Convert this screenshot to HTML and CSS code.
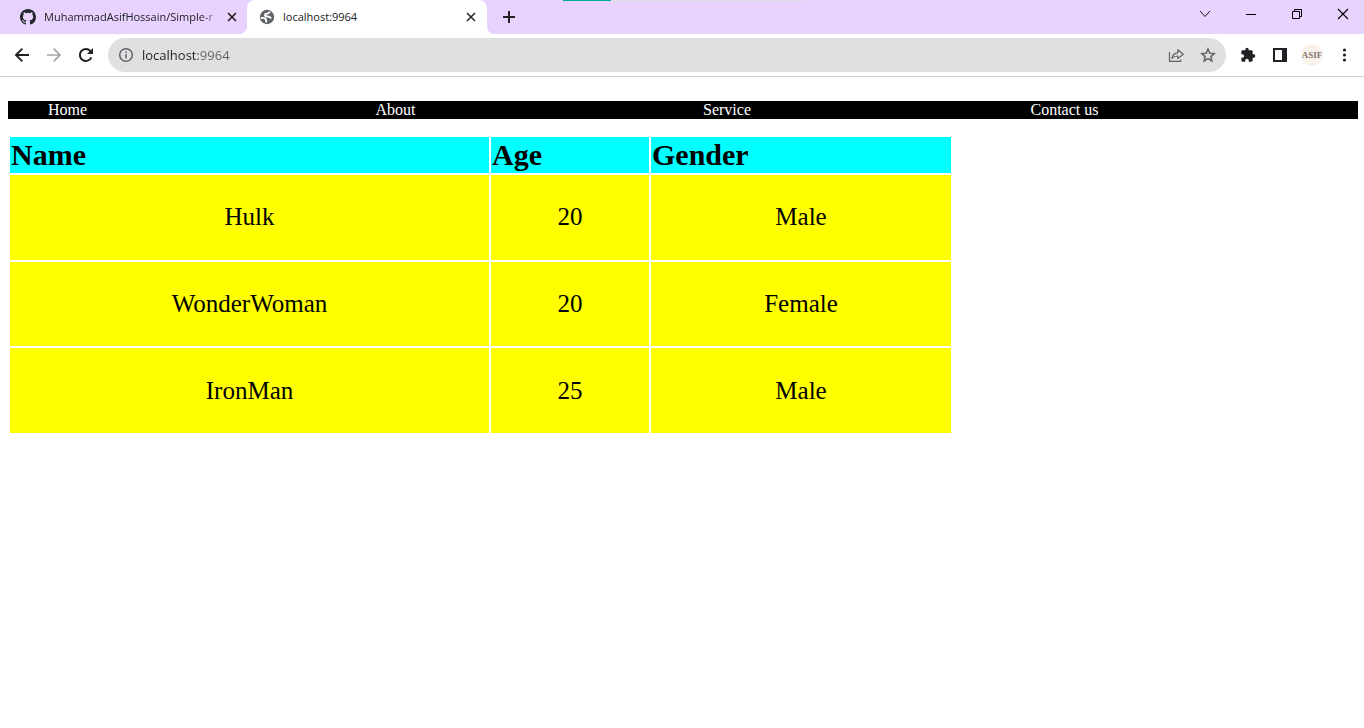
FILE: index.html
```html
<!DOCTYPE html>
<html lang="en">
<head>
<meta charset="utf-8">
<title>localhost:9964</title>
<link rel="stylesheet" href="styles.css">
</head>
<body>
<header class="browser">
  <div class="tab-strip">
    <div class="tab">
      <svg class="favicon" width="16" height="16" viewBox="0 0 16 16" fill="#24292f"><path d="M8 0C3.58 0 0 3.58 0 8c0 3.54 2.29 6.53 5.47 7.59.4.07.55-.17.55-.38 0-.19-.01-.82-.01-1.49-2.01.37-2.53-.49-2.69-.94-.09-.23-.48-.94-.82-1.13-.28-.15-.68-.52-.01-.53.63-.01 1.08.58 1.23.82.72 1.21 1.87.87 2.33.66.07-.52.28-.87.51-1.07-1.78-.2-3.64-.89-3.64-3.95 0-.87.31-1.59.82-2.15-.08-.2-.36-1.02.08-2.12 0 0 .67-.21 2.2.82a7.6 7.6 0 0 1 4 0c1.53-1.04 2.2-.82 2.2-.82.44 1.1.16 1.92.08 2.12.51.56.82 1.27.82 2.15 0 3.07-1.87 3.75-3.65 3.95.29.25.54.73.54 1.48 0 1.07-.01 1.93-.01 2.2 0 .21.15.46.55.38A8.01 8.01 0 0 0 16 8c0-4.42-3.58-8-8-8z"/></svg>
      <span class="tab-title tab-title-fade">MuhammadAsifHossain/Simple-r</span>
      <button class="tab-close" aria-label="Close tab"><svg width="16" height="16" viewBox="0 0 16 16" stroke="#202124" stroke-width="1.7"><path d="M4 4l8 8M12 4l-8 8"/></svg></button>
    </div>
    <div class="tab tab-active">
      <svg class="favicon" width="16" height="16" viewBox="0 0 16 16"><circle cx="8" cy="8" r="7.2" fill="#5f6368"/><path d="M10.500 3.200C9.700 4.300 8.900 4.600 7.600 4.700 6.400 4.800 5.900 5.300 6 6.200c.1 1 1 1.300 2.400 1.300 1.500 0 2.500.4 3.300 1.300M2.600 9c1.700-.2 3.300 0 4 .9.700 1 .2 1.700.7 2.800" fill="none" stroke="#fff" stroke-width="1.900" stroke-linecap="round"/></svg>
      <span class="tab-title">localhost:9964</span>
      <button class="tab-close" aria-label="Close tab"><svg width="16" height="16" viewBox="0 0 16 16" stroke="#202124" stroke-width="1.5"><path d="M4 4l8 8M12 4l-8 8"/></svg></button>
    </div>
    <button class="new-tab" aria-label="New tab"><svg width="16" height="16" viewBox="0 0 16 16" stroke="#202124" stroke-width="2"><path d="M2 8h12M8 2v12"/></svg></button>
    <div class="window-controls">
      <button class="window-button" aria-label="Search tabs"><svg width="12" height="12" viewBox="0 0 12 12" fill="none" stroke="#111"><path d="M1 3l5 5.500 5-5.500"/></svg></button>
      <button class="window-button" aria-label="Minimize"><svg width="12" height="12" viewBox="0 0 12 12" fill="none" stroke="#000"><path d="M1 6.500h10"/></svg></button>
      <button class="window-button" aria-label="Restore"><svg width="12" height="12" viewBox="0 0 12 12" fill="none" stroke="#000"><path d="M1.500 3.500h7v7h-7zM3.500 3.500v-2h7v7h-2"/></svg></button>
      <button class="window-button" aria-label="Close"><svg width="12" height="12" viewBox="0 0 12 12" fill="none" stroke="#000" stroke-width="1.1"><path d="M1 1l10 10M11 1L1 11"/></svg></button>
    </div>
    <div class="load-bar" role="progressbar" aria-label="Loading" aria-valuenow="20"><div class="load-bar-fill"></div></div>
  </div>
  <div class="toolbar">
    <div class="tool-group">
      <button class="tool" aria-label="Back"><svg width="16" height="16" viewBox="0 0 16 16" fill="none" stroke="#202124" stroke-width="1.900"><path d="M15 8H2.500M8.300 1.700L2 8l6.300 6.300"/></svg></button>
      <button class="tool" aria-label="Forward"><svg width="16" height="16" viewBox="0 0 16 16" fill="none" stroke="#a5a6a8" stroke-width="1.700"><path d="M1 8h12.500M7.700 1.700L14 8l-6.300 6.300"/></svg></button>
      <button class="tool" aria-label="Reload"><svg width="16" height="16" viewBox="0 0 16 16"><path d="M13.400 10.300A6 6 0 1 1 12.300 3.900L14 5.600" fill="none" stroke="#202124" stroke-width="2"/><path d="M15 1v6H9z" fill="#202124"/></svg></button>
    </div>
    <div class="address">
      <button class="info" aria-label="View site information"><svg width="16" height="16" viewBox="0 0 16 16" fill="none" stroke="#5f6368" stroke-width="1.500"><circle cx="8" cy="8" r="6.300"/><path d="M8 7v4.500M8 4.500v1.600"/></svg></button>
      <input class="url" type="text" aria-label="Address" value="localhost:9964" spellcheck="false">
      <button class="tool" aria-label="Share"><svg width="16" height="16" viewBox="0 0 16 16" fill="none" stroke="#5f6368" stroke-width="1.200"><path d="M1.500 5v9.400h11.200V12.500"/><path d="M4 11.500c.4-3.600 2.300-5.500 5.800-5.700V2.800L15.300 7.200l-5.500 4.400V9C7.200 8.900 5.400 9.700 4 11.500z" stroke-linejoin="round"/></svg></button>
      <button class="tool" aria-label="Bookmark this tab"><svg width="16" height="16" viewBox="0 0 16 16" fill="none" stroke="#5f6368" stroke-width="1.500"><path d="M8 2l1.800 4.200 4.500.4-3.400 3 1 4.400L8 11.700 4.100 14l1-4.400-3.400-3 4.500-.4z"/></svg></button>
    </div>
    <div class="tool-group">
      <button class="tool" aria-label="Extensions"><svg width="16" height="16" viewBox="0 0 24 24" fill="#202124"><path d="M20.500 11H19V7c0-1.100-.9-2-2-2h-4V3.500a2.500 2.500 0 0 0-5 0V5H4c-1.100 0-2 .9-2 2v3.800h1.500a2.700 2.700 0 0 1 0 5.400H2V20c0 1.100.9 2 2 2h3.800v-1.500a2.700 2.700 0 0 1 5.400 0V22H17c1.100 0 2-.9 2-2v-4h1.500a2.500 2.500 0 0 0 0-5z"/></svg></button>
      <button class="tool" aria-label="Side panel"><svg width="16" height="16" viewBox="0 0 16 16"><path d="M1 1h14v14H1zM3 3v10h7V3z" fill="#202124" fill-rule="evenodd"/></svg></button>
      <button class="tool" aria-label="Profile"><span class="avatar">ASIF</span></button>
      <button class="tool" aria-label="Menu"><svg width="16" height="16" viewBox="0 0 16 16" fill="#202124"><circle cx="8.500" cy="3" r="1.600"/><circle cx="8.500" cy="8" r="1.600"/><circle cx="8.500" cy="13" r="1.600"/></svg></button>
    </div>
  </div>
</header>
<main class="page">
  <nav>
    <ul class="menu">
      <li class="menu-item"><a class="menu-link" href="#home">Home</a></li>
      <li class="menu-item"><a class="menu-link" href="#about">About</a></li>
      <li class="menu-item"><a class="menu-link" href="#service">Service</a></li>
      <li class="menu-item"><a class="menu-link" href="#contact">Contact us</a></li>
    </ul>
  </nav>
  <table class="heroes">
    <thead>
      <tr><th class="col-name" scope="col">Name</th><th class="col-age" scope="col">Age</th><th scope="col">Gender</th></tr>
    </thead>
    <tbody>
      <tr><td>Hulk</td><td>20</td><td>Male</td></tr>
      <tr><td>WonderWoman</td><td>20</td><td>Female</td></tr>
      <tr><td>IronMan</td><td>25</td><td>Male</td></tr>
    </tbody>
  </table>
</main>
</body>
</html>
```

FILE: styles.css
```css
* {
  box-sizing: border-box;
}

body {
  margin: 0;
  background: #fff;
  color: #000;
  font-family: "Liberation Serif", "Times New Roman", serif;
  font-size: 16px;
}

button {
  display: flex;
  align-items: center;
  justify-content: center;
  flex: none;
  margin: 0;
  padding: 0;
  border: 0;
  background: none;
}

svg {
  display: block;
  flex: none;
}

.browser {
  border-bottom: 1px solid #ccc;
  overflow: hidden;
  font-family: "Open Sans", "Noto Sans", sans-serif;
  color: #202124;
}

.tab-strip {
  position: relative;
  display: flex;
  height: 34px;
  padding-left: 8px;
  background: #e8d3ff;
}

.tab {
  position: relative;
  display: flex;
  align-items: center;
  width: 240px;
  padding: 0 8px 0 12px;
}

.tab-active {
  border-radius: 8px 8px 0 0;
  background: #fff;
}

.tab:first-child {
  width: 239px;
  padding-right: 7px;
}

.tab-active::before,
.tab-active::after {
  content: "";
  position: absolute;
  bottom: 0;
  width: 8px;
  height: 8px;
}

.tab-active::before {
  right: 100%;
  background: radial-gradient(circle at 0 0, #e8d3ff 8px, #fff 8px);
}

.tab-active::after {
  left: 100%;
  background: radial-gradient(circle at 100% 0, #e8d3ff 8px, #fff 8px);
}

.tab-title {
  flex: 1;
  min-width: 0;
  margin: 0 6px 0 8px;
  overflow: hidden;
  white-space: nowrap;
  font-size: 11px;
  line-height: 16px;
}

.tab-title-fade {
  mask-image: linear-gradient(to right, #000 158px, transparent 178px);
}

.new-tab {
  width: 28px;
  margin-left: 8px;
}

.window-controls {
  display: flex;
  height: 28px;
  margin: 0 -2px 0 auto;
}

.window-button {
  width: 46px;
}

.load-bar {
  position: absolute;
  top: 0;
  left: 563px;
  width: 241px;
  height: 1px;
  background: #e2e2e2;
}

.load-bar-fill {
  width: 20%;
  height: 100%;
  background: #00a99d;
}

.toolbar {
  display: flex;
  align-items: center;
  gap: 6px;
  height: 42px;
  padding: 0 4px 0 6px;
}

.tool-group {
  display: flex;
}

.tool {
  width: 32px;
  height: 32px;
}

.address {
  display: flex;
  flex: 1;
  align-items: center;
  height: 34px;
  padding: 0 2px 0 10px;
  border-radius: 17px;
  background: #e0e0e0;
}

.url {
  flex: 1;
  min-width: 0;
  height: 20px;
  margin-left: 8px;
  padding: 0;
  border: 0;
  outline: 0;
  background: linear-gradient(to right, #202124 56px, #5f6368 56px);
  background-clip: text;
  color: #202124;
  -webkit-text-fill-color: transparent;
  font-family: inherit;
  font-size: 13px;
}

.avatar {
  width: 22px;
  height: 22px;
  border-radius: 50%;
  background: #faf3ec;
  color: #85736e;
  font-family: "Liberation Serif", serif;
  font-size: 9px;
  font-weight: bold;
  line-height: 22px;
  text-align: center;
}

.page {
  padding: 24px 6px 0 8px;
}

.menu {
  display: flex;
  margin: 0 0 16px;
  padding: 0 0 0 40px;
  background: #000;
  line-height: 18px;
  list-style: none;
}

.menu-item {
  flex: 1;
}

.menu-link {
  color: #fff;
  text-decoration: none;
}

.heroes {
  width: 70%;
  height: 300px;
  border-spacing: 2px;
  table-layout: fixed;
}

.heroes th {
  height: 36px;
  padding: 1px;
  background: aqua;
  font-size: 30px;
  line-height: 34px;
  text-align: left;
}

.heroes .col-name {
  width: 479px;
}

.heroes .col-age {
  width: 158px;
}

.heroes td {
  padding: 1px;
  background: yellow;
  font-size: 25px;
  text-align: center;
}
```
